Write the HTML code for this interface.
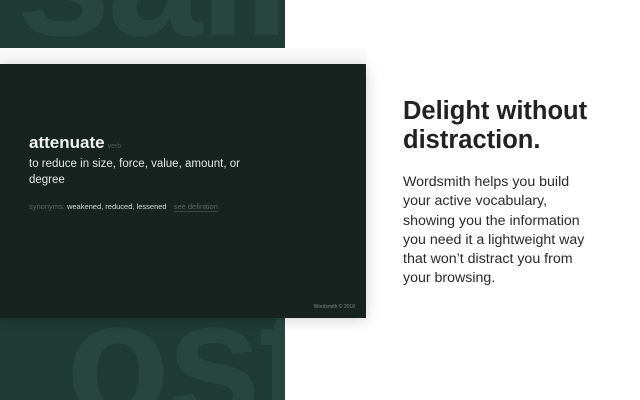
<!DOCTYPE html>
<html><head><style>
body{margin:0;width:640px;height:400px;overflow:hidden;background:#fff;position:relative;font-family:"Liberation Sans",sans-serif}
.green{position:absolute;left:0;top:0;width:285px;height:400px;background:#1e3b34;overflow:hidden}
.big{position:absolute;color:#26463e;font-weight:bold;font-size:170px;letter-spacing:-3px;line-height:1}
.strip{position:absolute;left:0;top:48px;width:366px;height:16px;background:#f9f9f9}
.card{position:absolute;left:0;top:64px;width:366px;height:254px;background:#16231f;box-shadow:0 2px 14px rgba(0,0,0,.18)}
.w{position:absolute;left:29px;top:69px;color:#f2f2f2;font-weight:bold;font-size:17px}
.w span{font-weight:normal;font-size:7px;color:#4f5d58;margin-left:3px}
.d{position:absolute;left:29px;top:92px;width:240px;color:#e6e8e7;font-size:11.5px;line-height:16px}
.s{position:absolute;left:29px;top:138px;font-size:7.5px;color:#5b6a64;white-space:nowrap}
.s b{font-weight:normal;color:#d8dcda}
.s u{text-decoration:none;border-bottom:1px solid #3c4a45;margin-left:5px}
.c{position:absolute;right:11px;top:240px;font-size:5px;color:#7b8884}
h1{position:absolute;left:403px;top:97px;margin:0;font-size:25.5px;line-height:29px;color:#222;font-weight:bold}
p{position:absolute;left:403px;top:173px;margin:0;font-size:14.2px;line-height:19.3px;color:#2a2a2a;white-space:nowrap}
</style></head><body>
<div class="green">
<div class="big" style="left:16px;top:-108px">sail</div>
<div class="big" style="left:66px;top:276px">ost</div>
</div>
<div class="strip"></div>
<div class="card">
<div class="w">attenuate<span>verb</span></div>
<div class="d">to reduce in size, force, value, amount, or degree</div>
<div class="s">synonyms: <b>weakened, reduced, lessened</b> <u>see definition</u></div>
<div class="c">Wordsmith © 2018</div>
</div>
<h1>Delight without<br>distraction.</h1>
<p>Wordsmith helps you build<br>your active vocabulary,<br>showing you the information<br>you need it a lightweight way<br>that won’t distract you from<br>your browsing.</p>
</body></html>
